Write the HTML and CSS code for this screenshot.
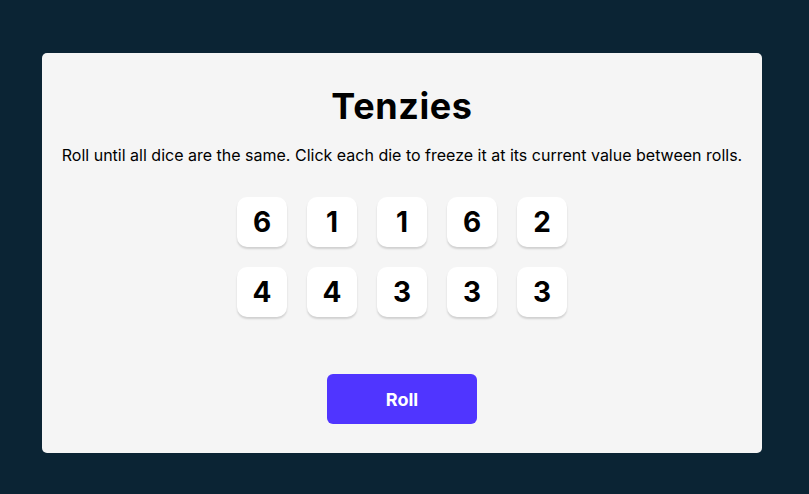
FILE: index.html
```html
<!DOCTYPE html>
<html>
<head>
<meta charset="utf-8">
<link rel="stylesheet" href="styles.css">
</head>
<body>
<main class="board">
  <h1 class="title">Tenzies</h1>
  <p class="instructions">Roll until all dice are the same. Click each die to freeze it at its current value between rolls.</p>
  <div class="dice">
    <button class="die">6</button>
    <button class="die">1</button>
    <button class="die">1</button>
    <button class="die">6</button>
    <button class="die">2</button>
    <button class="die">4</button>
    <button class="die">4</button>
    <button class="die">3</button>
    <button class="die">3</button>
    <button class="die">3</button>
  </div>
  <button class="roll">Roll</button>
</main>
</body>
</html>
```
FILE: styles.css
```css
html, body {
  margin: 0;
  padding: 0;
}
body {
  background: #0B2434;
  font-family: Inter, "Noto Sans", sans-serif;
  width: 809px;
  height: 494px;
  padding-top: 53px;
  padding-left: 42px;
  box-sizing: border-box;
}
.board {
  width: 720px;
  height: 400px;
  background: #F5F5F5;
  border-radius: 5px;
  display: flex;
  flex-direction: column;
  align-items: center;
  box-sizing: border-box;
  padding-top: 31px;
}
.title {
  margin: 0;
  font-size: 36px;
  font-weight: 700;
  line-height: 44px;
  color: #000;
  letter-spacing: 0.6px;
}
.instructions {
  margin: 17px 0 0;
  font-size: 16px;
  line-height: 20px;
  color: #000;
}
.dice {
  margin-top: 32px;
  display: grid;
  grid-template-columns: repeat(5, 50px);
  gap: 20px;
}
.die {
  width: 50px;
  height: 50px;
  border: none;
  border-radius: 10px;
  background: #FFFFFF;
  box-shadow: 0 2px 2px rgba(0, 0, 0, 0.15);
  font-family: Inter, "Noto Sans", sans-serif;
  font-size: 28px;
  font-weight: 700;
  color: #000;
  padding: 0;
}
.roll {
  margin-top: 57px;
  width: 150px;
  height: 50px;
  border: none;
  border-radius: 6px;
  background: #5035FF;
  color: #FFFFFF;
  font-family: Inter, "Noto Sans", sans-serif;
  font-size: 18px;
  font-weight: 700;
  padding: 0;
}
```
